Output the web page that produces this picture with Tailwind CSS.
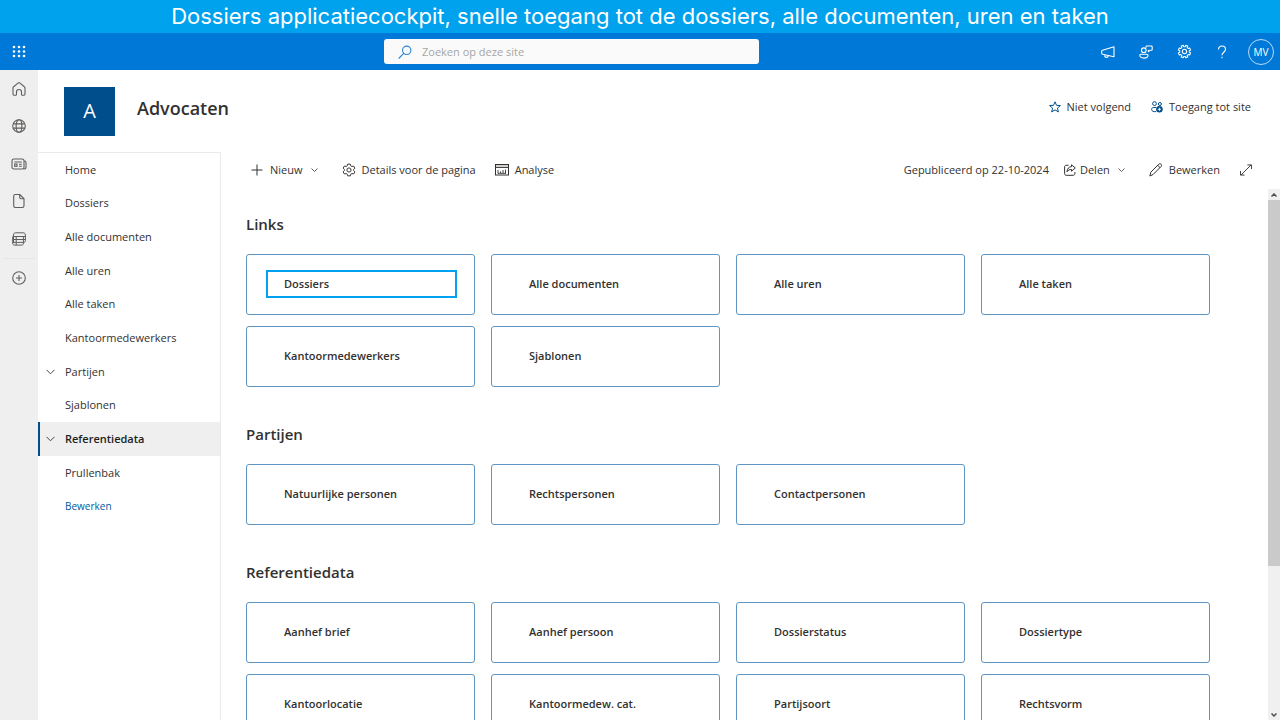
<!DOCTYPE html>
<html lang="nl">
<head>
<meta charset="utf-8">
<meta name="viewport" content="width=device-width, initial-scale=1">
<title>Advocaten</title>
<script src="https://cdn.jsdelivr.net/npm/@tailwindcss/browser@4"></script>
</head>
<body class="flex h-screen flex-col overflow-hidden bg-white font-['Open_Sans','Noto_Sans',sans-serif] text-[11px] leading-4 text-[#323130]">

<div class="flex h-[33px] shrink-0 items-center justify-center bg-[#00a2ed] text-center font-['Inter',sans-serif] text-[22px] leading-[33px] whitespace-nowrap text-white">Dossiers applicatiecockpit, snelle toegang tot de dossiers, alle documenten, uren en taken</div>

<header class="relative flex h-[37px] shrink-0 items-center justify-between bg-[#0078d7] text-white">
  <button aria-label="Startprogramma voor apps" class="flex h-full w-[38px] items-center justify-center">
    <svg width="14" height="14" viewBox="0 0 14 14" fill="currentColor"><circle cx="2" cy="2" r="1.3"/><circle cx="7" cy="2" r="1.3"/><circle cx="12" cy="2" r="1.3"/><circle cx="2" cy="6.5" r="1.3"/><circle cx="7" cy="6.5" r="1.3"/><circle cx="12" cy="6.5" r="1.3"/><circle cx="2" cy="11" r="1.3"/><circle cx="7" cy="11" r="1.3"/><circle cx="12" cy="11" r="1.3"/></svg>
  </button>
  <label class="absolute left-[30%] flex h-[25px] w-[375px] items-center gap-2 rounded-[3px] bg-[#fafafa] pl-3.5">
    <svg class="shrink-0" width="16" height="16" viewBox="0 0 16 16" fill="none" stroke="#2b83cf" stroke-width="1.1"><circle cx="8.700" cy="6.300" r="4.200"/><path d="M5.700 9.400.700 14.500"/></svg>
    <input type="search" aria-label="Zoeken" placeholder="Zoeken op deze site" class="w-full bg-transparent text-[11px] text-[#323130] outline-none placeholder:text-[#a6a6a6]">
  </label>
  <div class="ml-auto flex h-full items-center pr-1.5">
    <button aria-label="Aankondigingen" class="flex h-full w-[38px] items-center justify-center">
      <svg width="16" height="16" viewBox="0 0 16 16" fill="none" stroke="currentColor" stroke-width="1.1" stroke-linejoin="round"><path d="M14 2.800v10L2.500 10.200a1 1 0 0 1-.8-1V7.300a1 1 0 0 1 .8-1L14 2.800ZM4.500 10.800c0 1.600.6 2.600 1.900 2.600 1.100 0 1.800-.7 1.900-1.800"/></svg>
    </button>
    <button aria-label="Feedback" class="flex h-full w-[38px] items-center justify-center">
      <svg width="16" height="16" viewBox="0 0 16 16" fill="none" stroke="currentColor" stroke-width="1.1" stroke-linejoin="round"><circle cx="5.800" cy="6.200" r="2.300"/><path d="M2.600 10.200h6.200c1 0 1.200.5 1.200 1.100 0 1.800-1.700 2.800-4 2.800s-4.200-1-4.200-2.800c0-.6.2-1.100.8-1.100ZM8 3.800V2.900c0-.6.3-.9.9-.9h4.400c.6 0 .9.3.9.9v2.500c0 .6-.3.9-.9.9h-1.200l-1.700 1.400V6.300H9.800"/></svg>
    </button>
    <button aria-label="Instellingen" class="flex h-full w-[38px] items-center justify-center">
      <svg width="15" height="15" viewBox="0 0 16 16" fill="none" stroke="currentColor" stroke-width="1.1" stroke-linejoin="round"><path d="M6.700 1.300 7.100 2.700c.5.200 1.300.2 1.800 0l.4-1.400 2.200.9-.7 1.300c.5.500.9.900 1.300 1.400l1.500-.6.900 2.200-1.400.7c-.1.500-.1 1.100 0 1.600l1.400.7-.9 2.200-1.500-.6c-.4.500-.8.900-1.300 1.400l.7 1.300-2.200.9-.5-1.400c-.5-.1-1.100-.1-1.600 0l-.5 1.400-2.200-.9.700-1.300c-.5-.5-.9-.9-1.300-1.400l-1.500.6-.9-2.200 1.400-.7c.1-.5.1-1.100 0-1.600l-1.400-.7.900-2.200 1.500.6c.4-.5.800-.9 1.300-1.400l-.7-1.300Z"/><circle cx="8" cy="8" r="2.300"/></svg>
    </button>
    <button aria-label="Help" class="flex h-full w-[38px] items-center justify-center">
      <svg width="12" height="16" viewBox="0 0 12 16" fill="none" stroke="currentColor" stroke-width="1.1"><path d="M2.500 5.400C2.500 3.200 4 2 6 2s3.500 1.200 3.500 3.200c0 3-3.500 3.100-3.500 6.100"/><path d="M6 12.800v1.400"/></svg>
    </button>
    <button aria-label="Account MV" class="ml-[7px] flex size-[26px] items-center justify-center rounded-full border border-[#b9dcf7] text-[10px] font-medium">MV</button>
  </div>
</header>

<div class="flex min-h-0 flex-1">
  <aside class="flex w-[38px] shrink-0 flex-col items-center bg-[#efefef] text-[#605e5c]">
    <a href="#" aria-label="Start" class="flex h-[37px] w-full items-center justify-center"><svg width="16" height="16" viewBox="0 0 16 16" fill="none" stroke="currentColor" stroke-width="1.100" stroke-linejoin="round"><path d="M2 7c0-.6.2-1 .6-1.300L7.300 1.900c.5-.4.900-.4 1.400 0l4.700 3.800c.4.300.6.700.6 1.300v6c0 .8-.3 1.200-1 1.200h-1.600c-.6 0-.9-.4-.9-1v-2.400c0-1.400-.9-2.300-2.500-2.300s-2.500.9-2.500 2.300v2.400c0 .6-.3 1-.9 1H3c-.7 0-1-.4-1-1.200Z"/></svg></a>
    <a href="#" aria-label="Sites" class="flex h-[38px] w-full items-center justify-center"><svg width="16" height="16" viewBox="0 0 16 16" fill="none" stroke="currentColor" stroke-width="1.100"><circle cx="8" cy="8" r="6.300"/><ellipse cx="8" cy="8" rx="2.900" ry="6.300"/><path d="M2.200 5.900h11.600M2.200 10.100h11.600"/></svg></a>
    <a href="#" aria-label="Nieuws" class="flex h-[37px] w-full items-center justify-center"><svg width="16" height="16" viewBox="0 0 16 16" fill="none" stroke="currentColor" stroke-width="1.100"><rect x="1" y="3" width="12" height="10" rx="1.800"/><path d="M13 5h.6c.9 0 1.400.5 1.400 1.400v4.800c0 1.100-.8 1.800-2.400 1.800M3.300 6h7.500M8 8.300h2.800M8 10.300h2.800"/><rect x="3.700" y="8" width="2.300" height="2.300"/></svg></a>
    <a href="#" aria-label="Bestanden" class="flex h-[38px] w-full items-center justify-center"><svg width="16" height="16" viewBox="0 0 16 16" fill="none" stroke="currentColor" stroke-width="1.100" stroke-linejoin="round"><path d="M4.300 1.500h4.400L13 5.700v7.100c0 1-.6 1.700-1.700 1.700h-7c-1 0-1.600-.7-1.600-1.700V3.200c0-1 .6-1.700 1.600-1.700ZM8.700 1.500v3c0 .8.400 1.200 1.200 1.200H13"/></svg></a>
    <a href="#" aria-label="Lijsten" class="flex h-[38px] w-full items-center justify-center"><svg width="16" height="16" viewBox="0 0 16 16" fill="none" stroke="currentColor" stroke-linejoin="round"><path d="M2.500 12V4c0-1.400.8-2.200 2.200-2.200h7.500c1.400 0 2.200.8 2.200 2.200v5.500c0 .7-.2 1.100-.6 1.500L12.400 12.400"/><path d="M2.500 5.500h11.900M2 8.500h12.300M2 11.400h10.400M5.200 5.500v8.600M1.700 5.500v6.700c0 1.200.7 1.900 1.900 1.900h7c1.100 0 1.800-.6 1.800-1.700V5.500"/></svg></a>
    <div class="h-px w-8 bg-[#e6e6e6]"></div>
    <button aria-label="Maken" class="flex h-[37px] w-full items-center justify-center"><svg width="16" height="16" viewBox="0 0 16 16" fill="none" stroke="currentColor" stroke-width="1.100"><circle cx="8" cy="8" r="6.300"/><path d="M8 5v6M5 8h6"/></svg></button>
  </aside>

  <div class="flex min-w-0 flex-1 flex-col">
    <div class="flex h-[82px] shrink-0 items-center pr-[29px] pl-[26px]">
      <div class="flex h-[49px] w-[51px] shrink-0 items-center justify-center bg-[#004e8c] text-[20px] leading-none text-white">A</div>
      <h1 class="ml-[22px] pb-1.5 text-[18px] leading-6 font-semibold">Advocaten</h1>
      <div class="ml-auto flex items-center gap-5 pb-2">
        <button class="flex items-center gap-1.5"><svg width="12" height="12" viewBox="0 0 12 12" fill="none" stroke="#004e8c" stroke-width="1" stroke-linejoin="round"><path d="m6 .8 1.500 3.500 3.900.3-3 2.500 1 3.800L6 8.900l-3.400 2 1-3.800-3-2.500 3.900-.3Z"/></svg>Niet volgend</button>
        <button class="flex items-center gap-1.5"><svg width="12" height="12" viewBox="0 0 12 12" fill="none" stroke="#004e8c" stroke-width="1"><circle cx="3.500" cy="2.600" r="1.900"/><circle cx="8.900" cy="3" r="1.500"/><path d="M5 10.600C2.500 11 .6 10 .6 8.400c0-1.100.7-1.900 1.800-1.900H5"/><circle cx="8.400" cy="8.300" r="3.300" fill="#004e8c" stroke="none"/><path stroke="#fff" stroke-width=".9" d="M8.400 6.700v3.200M6.800 8.300H10"/></svg>Toegang tot site</button>
      </div>
    </div>

    <div class="flex min-h-0 flex-1">
      <nav aria-label="Site" class="w-[183px] shrink-0 border-t border-r border-[#edebe9]">
        <ul class="flex h-[370px] flex-col *:flex *:flex-1 *:items-center *:pl-[27px]">
          <li><a href="#">Home</a></li>
          <li><a href="#">Dossiers</a></li>
          <li><a href="#">Alle documenten</a></li>
          <li><a href="#">Alle uren</a></li>
          <li><a href="#">Alle taken</a></li>
          <li><a href="#">Kantoormedewerkers</a></li>
          <li class="relative"><button aria-label="Partijen uitvouwen" class="absolute left-2"><svg width="9" height="6" viewBox="0 0 9 6" fill="none" stroke="#484644"><path d="m.5.800 4 4 4-4"/></svg></button><a href="#">Partijen</a></li>
          <li><a href="#">Sjablonen</a></li>
          <li class="relative border-l-2 border-[#004e8c] bg-[#efefef] pl-[25px]! font-semibold text-[#201f1e]"><button aria-label="Referentiedata uitvouwen" class="absolute left-1.5"><svg width="9" height="6" viewBox="0 0 9 6" fill="none" stroke="#484644"><path d="m.5.800 4 4 4-4"/></svg></button><a href="#">Referentiedata</a></li>
          <li><a href="#">Prullenbak</a></li>
          <li class="text-[10px] text-[#005a9e]"><button>Bewerken</button></li>
        </ul>
      </nav>

      <main class="flex min-w-0 flex-1 flex-col">
        <div class="flex h-[37px] shrink-0 items-center pr-7 pb-px pl-[30px]">
          <button class="flex items-center gap-[7px]"><svg width="12" height="12" viewBox="0 0 12 12" fill="none" stroke="currentColor"><path d="M6 .5v11M.5 6h11"/></svg>Nieuw<svg class="ml-px" width="7" height="5" viewBox="0 0 7 5" fill="none" stroke="#605e5c"><path d="m.5.500 3 3 3-3"/></svg></button>
          <button class="ml-6 flex items-center gap-1.5"><svg width="14" height="14" viewBox="0 0 16 16" fill="none" stroke="currentColor" stroke-width="1.100" stroke-linejoin="round"><path d="M6.500 1.300h3l.5 1.900 1.300.8 1.900-.6 1.500 2.500L13.300 7.300v1.400l1.400 1.400-1.500 2.500-1.900-.6-1.300.8-.5 1.900h-3L6 12.800 4.700 12l-1.900.6-1.500-2.500 1.400-1.400V7.300L1.300 5.900l1.500-2.500 1.900.6L6 3.200Z"/><circle cx="8" cy="8" r="2.400"/></svg>Details voor de pagina</button>
          <button class="ml-[19px] flex items-center gap-1.5"><svg width="14" height="12" viewBox="0 0 14 12" fill="none" stroke="currentColor"><path fill="#d2d0ce" stroke="none" d="M1 1h12v2H1z"/><rect x=".5" y=".5" width="13" height="10.500"/><path d="M1 3.500h12M3 9.500V6M3 9.300h8M5.500 9V7.500M8 9V6M10.500 9.500V5.500" stroke-width=".9"/></svg>Analyse</button>
          <span class="ml-auto whitespace-nowrap">Gepubliceerd op 22-10-2024</span>
          <button class="ml-[15px] flex items-center gap-1"><svg width="12" height="12" viewBox="0 0 12 12" fill="none" stroke="currentColor" stroke-linejoin="round"><path d="M4.500 1.300H2.200C1.200 1.300.6 1.900.6 2.900v6.700c0 1 .6 1.700 1.600 1.700h7c1 0 1.700-.7 1.700-1.700V8"/><path d="M7.500.8 11.300 4 7.500 7.200V5.500C5.500 5.400 4.200 6 3 7.800c.2-3.200 1.900-5 4.500-5.200Z"/></svg>Delen<svg class="ml-1" width="7" height="5" viewBox="0 0 7 5" fill="none" stroke="#605e5c"><path d="m.5.500 3 3 3-3"/></svg></button>
          <button class="ml-6 flex items-center gap-1.5"><svg width="14" height="14" viewBox="0 0 14 14" fill="none" stroke="currentColor" stroke-linejoin="round"><path d="m.900 13 .9-3.800 8-8c.8-.7 1.700-.7 2.300 0s.7 1.500 0 2.300l-8 8ZM8.700 2.300 11 4.600"/></svg>Bewerken</button>
          <button aria-label="Uitvouwen" class="ml-5"><svg width="12" height="12" viewBox="0 0 13 12" fill="none" stroke="currentColor"><path d="M1 11.500 12 .500M8 .500h4.500V5M.500 7v4.500H5"/></svg></button>
        </div>

        <div class="flex min-h-0 flex-1">
          <div class="min-w-0 flex-1 overflow-hidden pt-[23px] pr-[58px] pl-[25px] font-semibold">
            <section class="mb-[35px]">
              <h2 class="mb-[18px] text-[15px] leading-6">Links</h2>
              <div class="grid grid-cols-4 gap-x-4 gap-y-[11px] *:flex *:h-[61px] *:items-center *:rounded-[3px] *:border *:border-[#5f95c2] *:pb-0.5 *:pl-[37px]">
                <a href="#" class="pr-[17px] pl-[19px]!"><span class="flex h-7 w-full items-center border-2 border-[#00a2ed] pl-4">Dossiers</span></a>
                <a href="#">Alle documenten</a>
                <a href="#">Alle uren</a>
                <a href="#">Alle taken</a>
                <a href="#">Kantoormedewerkers</a>
                <a href="#">Sjablonen</a>
              </div>
            </section>
            <section class="mb-[35px]">
              <h2 class="mb-[18px] text-[15px] leading-6">Partijen</h2>
              <div class="grid grid-cols-4 gap-x-4 gap-y-[11px] *:flex *:h-[61px] *:items-center *:rounded-[3px] *:border *:border-[#5f95c2] *:pb-0.5 *:pl-[37px]">
                <a href="#">Natuurlijke personen</a>
                <a href="#">Rechtspersonen</a>
                <a href="#">Contactpersonen</a>
              </div>
            </section>
            <section>
              <h2 class="mb-[18px] text-[15px] leading-6">Referentiedata</h2>
              <div class="grid grid-cols-4 gap-x-4 gap-y-[11px] *:flex *:h-[61px] *:items-center *:rounded-[3px] *:border *:border-[#5f95c2] *:pb-0.5 *:pl-[37px]">
                <a href="#">Aanhef brief</a>
                <a href="#">Aanhef persoon</a>
                <a href="#">Dossierstatus</a>
                <a href="#">Dossiertype</a>
                <a href="#">Kantoorlocatie</a>
                <a href="#">Kantoormedew. cat.</a>
                <a href="#">Partijsoort</a>
                <a href="#">Rechtsvorm</a>
              </div>
            </section>
          </div>
          <div aria-hidden="true" class="flex w-3 shrink-0 flex-col items-center bg-[#f0f0f0]">
            <div class="flex h-[11px] items-center"><svg width="6" height="4" viewBox="0 0 6 4" fill="none" stroke="#505050" stroke-width="1.500"><path d="m.5 3.500 2.500-2.500 2.500 2.500"/></svg></div>
            <div class="h-[69%] w-full bg-[#cacaca]"></div>
            <div class="mt-auto flex h-[11px] items-center"><svg width="6" height="4" viewBox="0 0 6 4" fill="none" stroke="#505050" stroke-width="1.500"><path d="m.5.500 2.500 2.500 2.500-2.500"/></svg></div>
          </div>
        </div>
      </main>
    </div>
  </div>
</div>
</body>
</html>
